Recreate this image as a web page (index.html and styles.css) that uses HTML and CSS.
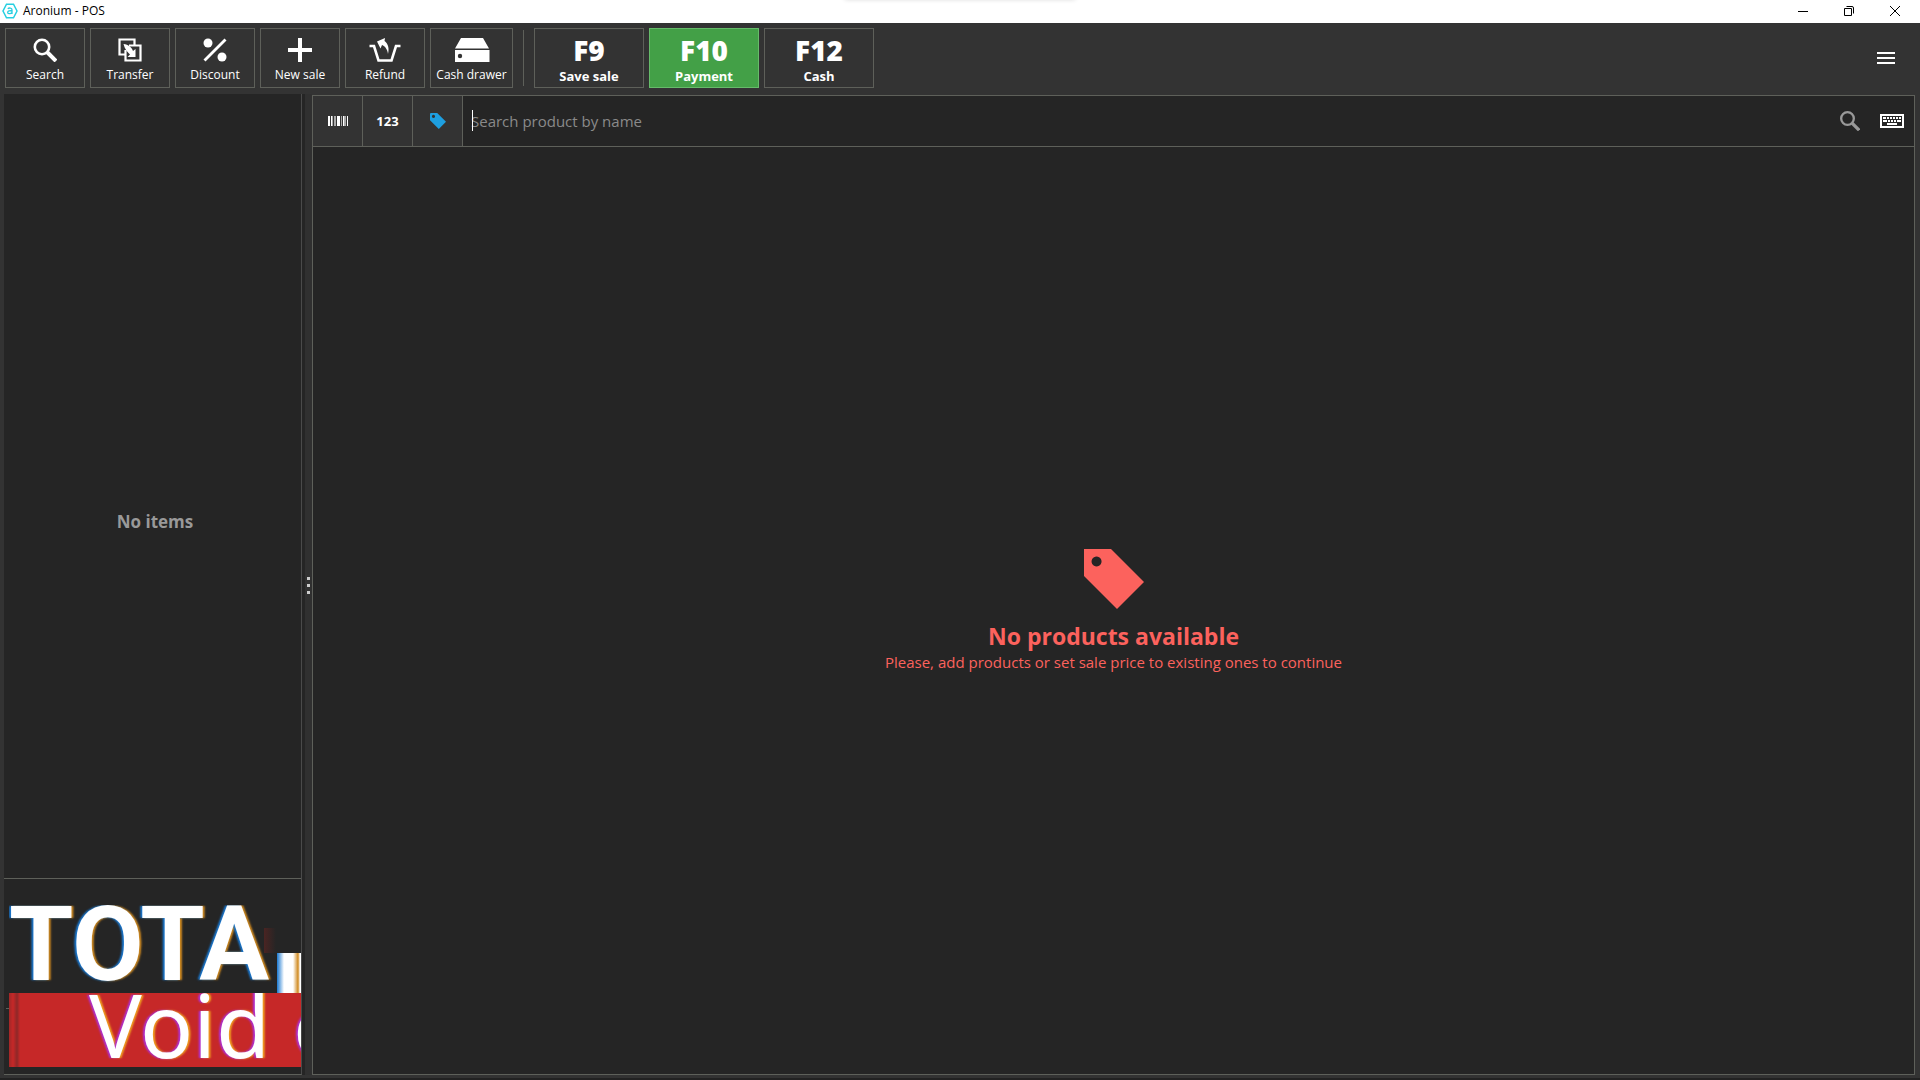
FILE: index.html
```html
<!DOCTYPE html>
<html lang="en">

<head>
    <meta charset="UTF-8">
    <meta name="viewport" content="width=device-width, initial-scale=1.0">
    <title>Aronium - POS</title>
    <link rel="stylesheet" href="styles.css">
</head>

<body>
    <header class="titlebar">
        <svg class="logo" viewBox="0 0 16 16">
            <path d="M4.500 1.200h7L15 8l-3.500 6.800h-7L1 8z" fill="none" stroke="#27cfe0" stroke-width="1.500" />
            <path d="M5.800 5.800c1-1.200 4.200-1.200 4.200 1v4.200M10 7.800c-2.200-.2-4.300 0-4.300 1.600s3.300 1.800 4.300 0" fill="none" stroke="#27cfe0" stroke-width="1.300" />
        </svg>
        <span class="title">Aronium - POS</span>
        <div class="window-btns">
            <button aria-label="Minimize"><svg viewBox="0 0 10 10"><path d="M0 5.500h10" /></svg></button>
            <button aria-label="Restore"><svg viewBox="0 0 10 10"><path d="M.5 2.500h7v7h-7zM2.500 .5h5.500q1.500 0 1.500 1.500v5.500" /></svg></button>
            <button aria-label="Close"><svg viewBox="0 0 10 10"><path d="M0 0l10 10M10 0L0 10" /></svg></button>
        </div>
    </header>

    <nav class="toolbar">
        <button class="tool">
            <svg width="24" height="24" viewBox="0 0 24 24"><circle cx="9" cy="9" r="7.200" fill="none" stroke="#fff" stroke-width="2.600" /><path d="M14 14l9 9" stroke="#fff" stroke-width="4" /></svg>
            <span>Search</span>
        </button>
        <button class="tool">
            <svg width="24" height="24" viewBox="0 0 24 24"><path d="M7 16.500H1.500V1.500h15V7M11 7.500h11.500v15h-15V12" fill="none" stroke="#fff" stroke-width="2.200" /><path d="M5.500 6c5 .5 8 3 9.500 7l2.500-2v8h-8l2.500-2.500C10 14.500 6.500 11 5.500 6z" fill="#fff" /></svg>
            <span>Transfer</span>
        </button>
        <button class="tool">
            <svg width="24" height="24" viewBox="0 0 24 24"><circle cx="5" cy="5" r="4.500" fill="#fff" /><circle cx="19" cy="19" r="4.500" fill="#fff" /><path d="M1.500 22.500l21-21" stroke="#fff" stroke-width="2.800" /></svg>
            <span>Discount</span>
        </button>
        <button class="tool">
            <svg width="24" height="24" viewBox="0 0 24 24"><path d="M12 0v24M0 12h24" stroke="#fff" stroke-width="4" /></svg>
            <span>New sale</span>
        </button>
        <button class="tool">
            <svg width="32" height="24" viewBox="0 0 32 24"><path d="M.5 8h4.500l4.500 14.500h13L27 8h4.500" fill="none" stroke="#fff" stroke-width="2.600" /><path d="M8 3.500L16 0l-.5 3c3.500 2.500 5 7 3.500 13-.5-4.500-3-8-6-9l-1.500 3.500z" fill="#fff" /></svg>
            <span>Refund</span>
        </button>
        <button class="tool drawer">
            <svg width="36" height="24" viewBox="0 0 36 24"><path d="M7 0h22l6 10.500H1zM1 12h34.500v12H1z" fill="#fff" /><circle cx="6" cy="18" r="2.200" fill="#333" /></svg>
            <span>Cash drawer</span>
        </button>
        <div class="separator"></div>
        <button class="tool key"><b>F9</b><span>Save sale</span></button>
        <button class="tool key payment"><b>F10</b><span>Payment</span></button>
        <button class="tool key"><b>F12</b><span>Cash</span></button>
        <button class="menu" aria-label="Menu">
            <svg width="18" height="12" viewBox="0 0 18 12"><path d="M0 1h18M0 6h18M0 11h18" stroke="#fff" stroke-width="2" /></svg>
        </button>
    </nav>

    <main class="workspace">
        <aside class="cart">
            <div class="cart-items">No items</div>
            <div class="cart-total">
                <div class="total">TOTA<i class="fragment"></i></div>
                <div class="void">Void o</div>
            </div>
        </aside>
        <div class="splitter"><i></i><i></i><i></i></div>
        <section class="products">
            <div class="search-bar">
                <button class="mode" aria-label="Barcode">
                    <svg width="20" height="10" viewBox="0 0 20 10" shape-rendering="crispEdges"><path d="M0 0h2v10H0zM3 0h1v10H3zM9 0h3v10H9zM15 0h1v10h-1zM19 0h1v10h-1z" fill="#fff" /><path d="M4 0h1v10H4zM6 0h2v10H6zM13 0h1v10h-1zM16 0h2v10h-2z" fill="#aaa" /></svg>
                </button>
                <button class="mode">123</button>
                <button class="mode" aria-label="Name">
                    <svg width="16" height="16" viewBox="0 0 60 60"><path fill="#1e9fe0" fill-rule="evenodd" d="M4 0h23l33 33-27 27L0 27V4q0-4 4-4zM13 7a6 6 0 1 0 .1 0z" /></svg>
                </button>
                <label class="field">
                    <input type="text" placeholder="Search product by name" aria-label="Search product by name">
                    <i class="caret"></i>
                </label>
                <button class="icon" aria-label="Search">
                    <svg width="20" height="20" viewBox="0 0 24 24"><circle cx="9" cy="9" r="7.600" fill="none" stroke="#999" stroke-width="2.800" /><path d="M14.500 14.500l8.500 8.500" stroke="#999" stroke-width="4" /></svg>
                </button>
                <button class="icon keyboard" aria-label="Keyboard">
                    <svg width="24" height="14" viewBox="0 0 24 14" shape-rendering="crispEdges"><path d="M1 1h22v12H1z" fill="none" stroke="#fff" stroke-width="2" /><path d="M3 4h3M7 4h2M10 4h2M13 4h2M16 4h2M19 4h2" stroke="#fff" stroke-width="2" /><path d="M3 7h4M8 7h2M11 7h2M14 7h2M17 7h4M7 10h10" stroke="#fff" stroke-width="2" /></svg>
                </button>
            </div>
            <div class="empty">
                <svg width="60" height="60" viewBox="0 0 60 60"><path fill="#fc625d" fill-rule="evenodd" d="M0 0h27l33 33-27 27L0 27zM12.500 7.500a5 5 0 1 0 .1 0z" /></svg>
                <h2>No products available</h2>
                <p>Please, add products or set sale price to existing ones to continue</p>
            </div>
        </section>
    </main>
</body>

</html>
```
FILE: styles.css
```css
* {
    margin: 0;
    padding: 0;
    box-sizing: border-box;
}

body {
    height: 100vh;
    display: flex;
    flex-direction: column;
    overflow: hidden;
    background-color: #333;
    border-bottom: 2px solid #222;
    color: #fff;
    font-family: "Open Sans", "Noto Sans", sans-serif;
}

button {
    border: none;
    background: none;
    color: inherit;
    font-family: inherit;
}

svg {
    display: block;
}

/* title bar */
.titlebar {
    position: relative;
    height: 23px;
    padding: 0 2px 2px;
    display: flex;
    align-items: center;
    gap: 5px;
    background-color: #fff;
    color: #000;
    font-size: 12px;
    line-height: 20px;
}

.titlebar::before {
    content: "";
    position: absolute;
    left: 44%;
    right: 44%;
    top: -5px;
    height: 4px;
    box-shadow: 0 0 5px #ccc;
}

.logo {
    width: 16px;
    height: 16px;
}

.window-btns {
    margin-left: auto;
    display: flex;
}

.window-btns button {
    width: 46px;
    height: 20px;
    display: flex;
    justify-content: center;
    align-items: center;
}

.window-btns svg {
    width: 10px;
    height: 10px;
    fill: none;
    stroke: #000;
}

/* toolbar */
.toolbar {
    height: 71px;
    padding: 5px;
    display: flex;
    gap: 5px;
}

.tool {
    width: 80px;
    height: 60px;
    padding-top: 9px;
    border: 1px solid #5e605a;
    display: flex;
    flex-direction: column;
    align-items: center;
    gap: 4px;
    font-size: 12px;
    line-height: 18px;
    white-space: nowrap;
}

.drawer {
    width: 83px;
}

.separator {
    width: 1px;
    height: 56px;
    margin: 2px 5px 0;
    background-color: #5e605a;
}

.key {
    width: 110px;
    padding-top: 7px;
    gap: 3px;
    font-size: 13px;
    font-weight: bold;
}

.key b {
    font-size: 28px;
    line-height: 28px;
}

.payment {
    background-color: #43a047;
    border-color: #66bb6a;
}

.menu {
    width: 58px;
    height: 60px;
    margin-left: auto;
    display: flex;
    justify-content: center;
    align-items: center;
}

/* workspace */
.workspace {
    flex: 1;
    min-height: 0;
    padding: 0 5px 3px 4px;
    display: flex;
}

.cart {
    width: 298px;
    display: flex;
    flex-direction: column;
    background-color: #252525;
    border-right: 1px solid #4a4a4a;
    border-bottom: 1px solid #5e605a;
}

.cart-items {
    flex: 1;
    padding: 70px 0 0 5px;
    display: flex;
    justify-content: center;
    align-items: center;
    color: #999;
    font-size: 17px;
    font-weight: bold;
}

.cart-total {
    padding: 26px 0 7px 5px;
    border-top: 1px solid #5e605a;
    background: linear-gradient(#5e605a, #5e605a) 2px 129px / 3px 1px no-repeat;
}

.total,
.void {
    overflow: hidden;
    white-space: nowrap;
}

.total {
    position: relative;
    height: 88px;
    font-family: Roboto, "Liberation Sans", sans-serif;
    font-size: 104px;
    line-height: 80px;
    font-weight: bold;
    text-shadow: -2px 0 2px #1a78d0, 2px 0 2px #d08a20;
}

/* clipped end of the total label */
.fragment {
    position: absolute;
    right: 0;
    bottom: 0;
    width: 37px;
    height: 65px;
    background: linear-gradient(90deg, transparent 13px, #1a78d0 13px, #fff 20px, #fff 29px, #d08a20 34px, #fff 36px) bottom / 100% 40px no-repeat,
        linear-gradient(90deg, #4a2422, #252525 12px) top / 100% 25px no-repeat;
}

.void {
    height: 74px;
    padding-left: 80px;
    background: linear-gradient(90deg, #a02828, #c62828 4px, #8e2828 8px, #c62828 11px);
    font-family: "Noto Sans", sans-serif;
    font-size: 88px;
    line-height: 62px;
    text-shadow: -2px 0 2px #b030d0, 2px 0 2px #f0a020;
}

.splitter {
    width: 10px;
    padding: 2px 0 0 3px;
    display: flex;
    flex-direction: column;
    justify-content: center;
    align-items: center;
    gap: 4px;
    background: linear-gradient(90deg, #252525 3px, #303030 3px);
}

.splitter i {
    width: 3px;
    height: 3px;
    background-color: #ccc;
}

.products {
    flex: 1;
    min-width: 0;
    margin-top: 1px;
    display: flex;
    flex-direction: column;
    background-color: #252525;
    border: 1px solid #5e605a;
}

.search-bar {
    height: 51px;
    display: flex;
    border-bottom: 1px solid #5e605a;
}

.mode {
    width: 50px;
    display: flex;
    justify-content: center;
    align-items: center;
    background-color: #333;
    border-right: 1px solid #5e605a;
    font-size: 13px;
    font-weight: bold;
}

.field {
    flex: 1;
    position: relative;
    display: flex;
}

.field input {
    flex: 1;
    padding: 0 8px;
    border: none;
    outline: none;
    background: none;
    color: #fff;
    font-family: inherit;
    font-size: 15px;
}

.field input::placeholder {
    color: #8a8a8a;
}

.caret {
    position: absolute;
    left: 9px;
    top: 14px;
    width: 1px;
    height: 21px;
    background-color: #fff;
}

.icon {
    width: 40px;
    display: flex;
    justify-content: center;
    align-items: center;
}

.keyboard {
    width: 44px;
}

.empty {
    flex: 1;
    display: flex;
    flex-direction: column;
    justify-content: center;
    align-items: center;
    color: #fc625d;
}

.empty h2 {
    margin-top: 11px;
    font-size: 23px;
    line-height: 32px;
}

.empty p {
    font-size: 15px;
    line-height: 20px;
}
```
